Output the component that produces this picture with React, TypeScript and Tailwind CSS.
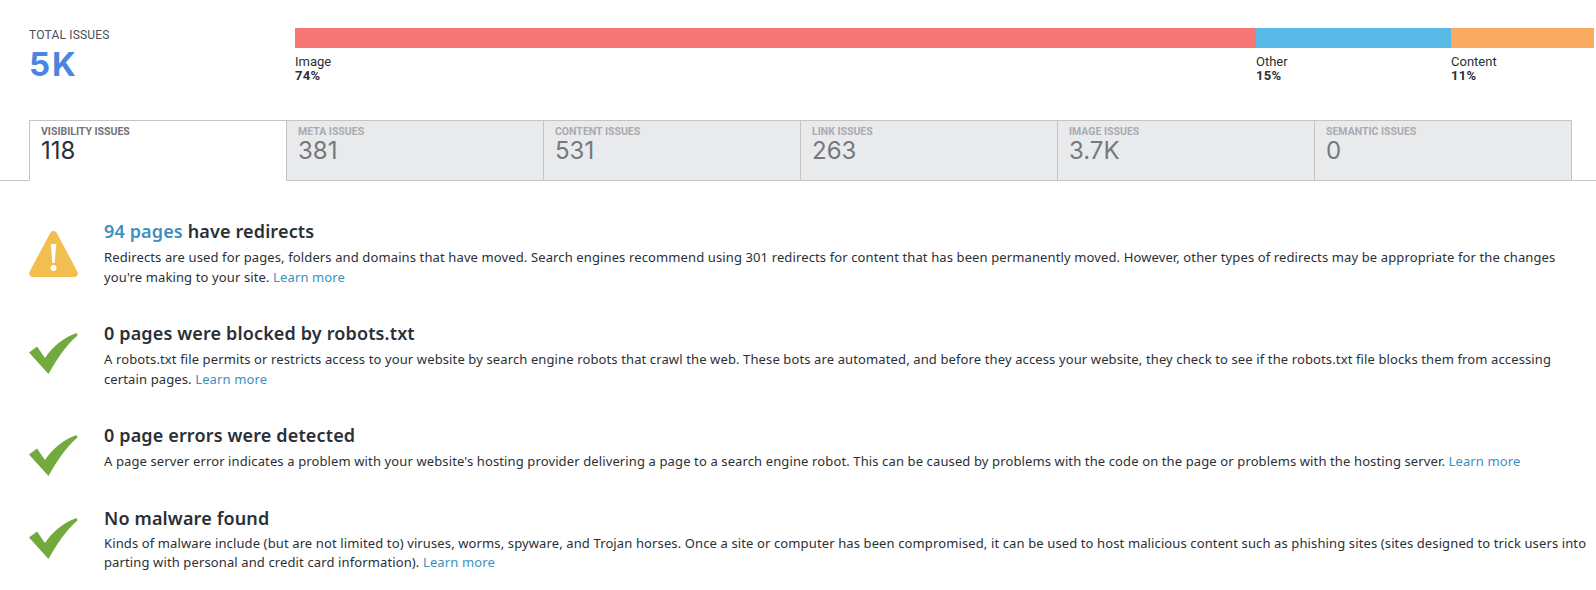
import React from "react";

const Warn = () => (
  <svg width="50" height="48" viewBox="0 0 50 48" className="block">
    <path d="M24.500 0c1.600 0 2.600.8 3.400 2.200L48.300 40.500c1.300 2.400.2 5.500-2.600 5.500H3.300C.5 46-.6 42.900.7 40.500L21.100 2.200C21.900.8 22.900 0 24.500 0Z" fill="#f2be50" />
    <path d="M21.800 13h5.400l-1.500 19h-2.400Z" fill="#fff" />
    <circle cx="24.500" cy="37" r="3" fill="#fff" />
  </svg>
);

const Check = () => (
  <svg width="50" height="42" viewBox="0 0 50 42" className="block">
    <path d="M0 19.500 8 13.500 16 25C24 13 34 5 47.500 0L48.500 2.500C37 12 28 26 19.500 41Z" fill="#72aa3e" />
  </svg>
);

const tabs = [
  ["VISIBILITY ISSUES", "118"],
  ["META ISSUES", "381"],
  ["CONTENT ISSUES", "531"],
  ["LINK ISSUES", "263"],
  ["IMAGE ISSUES", "3.7K"],
  ["SEMANTIC ISSUES", "0"],
];

const segs = [
  { name: "Image", pct: "74%", w: "w-[961px]", c: "bg-[#f77776]" },
  { name: "Other", pct: "15%", w: "w-[195px]", c: "bg-[#58b9e6]" },
  { name: "Content", pct: "11%", w: "w-[143px]", c: "bg-[#fbaa62]" },
];

const Learn = () => <a className="text-[#3d8fc1]">Learn more</a>;

const Row = ({
  icon,
  title,
  lines,
  className,
  textClass = "mt-[4px] leading-[20px]",
}: {
  icon: React.ReactNode;
  title: React.ReactNode;
  lines: React.ReactNode;
  className: string;
  textClass?: string;
}) => (
  <div className={`flex ${className}`}>
    <div className="h-[48px] w-[104px] shrink-0 pt-[12px] pl-[29px]">{icon}</div>
    <div className="w-[1486px]">
      <h3 className="text-[18px] leading-[24px] font-semibold tracking-[0.14px] text-[#2b2f36]">{title}</h3>
      <p className={`text-[13px] tracking-[0.12px] text-[#2b2f36] ${textClass}`}>{lines}</p>
    </div>
  </div>
);

export default function App() {
  return (
    <div className="h-[590px] w-[1596px] overflow-hidden bg-white font-['Noto_Sans','Open_Sans',sans-serif]">
      <div className="flex h-[120px] pt-[28px]">
        <div className="w-[295px] shrink-0 pl-[29px] font-['Roboto',sans-serif]">
          <div className="text-[12px] leading-[15px] tracking-[0.2px] text-[#4a4f58]">TOTAL ISSUES</div>
          <div className="mt-[4px] font-['Inter',sans-serif] text-[33px] leading-[34px] font-bold tracking-[2px] text-[#4a86e0]">5K</div>
        </div>
        <div className="flex">
          {segs.map((s) => (
            <div key={s.name} className={s.w}>
              <div className={`h-[20px] ${s.c}`} />
              <div className="mt-[7px] font-['Roboto',sans-serif] text-[13px] leading-[14px] text-[#2b2f36]">
                <div>{s.name}</div>
                <div className="font-bold tracking-[0.3px]">{s.pct}</div>
              </div>
            </div>
          ))}
        </div>
      </div>

      <div className="flex h-[61px] border-b border-[#c4c4c4] pl-[29px]">
        {tabs.map(([label, value], i) => (
          <div
            key={label}
            className={`h-[61px] border-t border-r border-[#c4c4c4] pt-[4px] pl-[11px] font-['Roboto',sans-serif] ${
              i === 0 ? "w-[258px] border-l border-b border-b-white bg-white" : "w-[257px] border-b bg-[#e9eaec]"
            }`}
          >
            <div className={`text-[10.500px] leading-[13px] font-bold ${i === 0 ? "text-[#6f737a]" : "text-[#a9abaf]"}`}>{label}</div>
            <div className={`font-['Inter',sans-serif] text-[24px] leading-[26px] ${i === 0 ? "text-[#2b2f36]" : "text-[#75787e]"}`}>{value}</div>
          </div>
        ))}
      </div>

      <Row
        className="mt-[38px]"
        icon={<Warn />}
        title={<><span className="text-[#3d8fc1]">94 pages</span> have redirects</>}
        lines={<>Redirects are used for pages, folders and domains that have moved. Search engines recommend using 301 redirects for content that has been permanently moved. However, other types of redirects may be appropriate for the changes you're making to your site. <Learn /></>}
      />
      <Row
        className="mt-[34px]"
        icon={<Check />}
        title="0 pages were blocked by robots.txt"
        lines={<>A robots.txt file permits or restricts access to your website by search engine robots that crawl the web. These bots are automated, and before they access your website, they check to see if the robots.txt file blocks them from accessing certain pages. <Learn /></>}
      />
      <Row
        className="mt-[34px]"
        icon={<Check />}
        title="0 page errors were detected"
        lines={<>A page server error indicates a problem with your website's hosting provider delivering a page to a search engine robot. This can be caused by problems with the code on the page or problems with the hosting server. <Learn /></>}
      />
      <Row
        className="mt-[35px]"
        textClass="mt-[4px] leading-[19px]"
        icon={<Check />}
        title="No malware found"
        lines={<>Kinds of malware include (but are not limited to) viruses, worms, spyware, and Trojan horses. Once a site or computer has been compromised, it can be used to host malicious content such as phishing sites (sites designed to trick users into parting with personal and credit card information). <Learn /></>}
      />
    </div>
  );
}
